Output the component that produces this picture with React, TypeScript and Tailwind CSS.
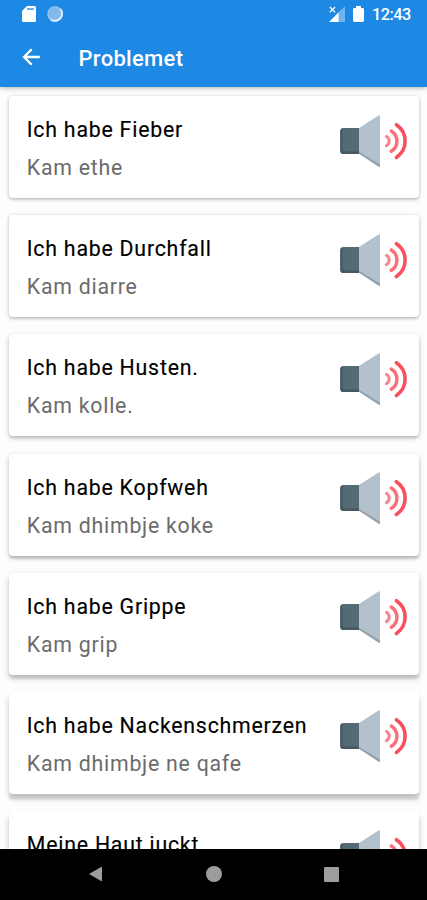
const phrases = [
  { de: 'Ich habe Fieber', sq: 'Kam ethe', shadow: 'shadow-[0_1px_4px_rgba(0,0,0,0.24),0_2px_2px_rgba(0,0,0,0.08)]' },
  { de: 'Ich habe Durchfall', sq: 'Kam diarre', shadow: 'shadow-[0_1px_4px_rgba(0,0,0,0.24),0_2px_2px_rgba(0,0,0,0.09)]' },
  { de: 'Ich habe Husten.', sq: 'Kam kolle.', shadow: 'shadow-[0_2px_5px_rgba(0,0,0,0.24),0_2px_2px_rgba(0,0,0,0.09)]' },
  { de: 'Ich habe Kopfweh', sq: 'Kam dhimbje koke', shadow: 'shadow-[0_2px_5px_rgba(0,0,0,0.24),0_3px_2px_rgba(0,0,0,0.1)]' },
  { de: 'Ich habe Grippe', sq: 'Kam grip', shadow: 'shadow-[0_3px_6px_rgba(0,0,0,0.22),0_4px_2px_rgba(0,0,0,0.1)]' },
  { de: 'Ich habe Nackenschmerzen', sq: 'Kam dhimbje ne qafe', shadow: 'shadow-[0_4px_6px_rgba(0,0,0,0.18),0_6px_2px_rgba(0,0,0,0.1)]' },
  { de: 'Meine Haut juckt', sq: '', shadow: 'shadow-[0_5px_6px_rgba(0,0,0,0.2),0_6px_2px_rgba(0,0,0,0.1)]' },
];

function Speaker() {
  return (
    <svg className="mt-[17.5px] h-[54px] w-[70px] shrink-0" viewBox="0 0 70 54">
      <path d="M4.5 14H21V40H4.5Q1.3 40 1.3 36.8V17.2Q1.3 14 4.5 14Z" fill="#546a75" />
      <path d="M1.3 34V36.8Q1.3 40 4.5 40H21V37.5H7Q3.5 37.5 3.5 34V14.2Q1.3 15 1.3 17.2Z" fill="#465963" />
      <path d="M20 14 39.5 1.5Q41 .8 41 2.5V51.5Q41 53.4 39.5 52.4L20 39.5Z" fill="#b3c1cd" />
      <path d="M20 37.8 41 50.5V52Q41 53.4 39.5 52.4L20 39.8Z" fill="#93a2ae" />
      <g fill="none" strokeLinecap="round">
        <path d="M47.5 22.5A5.3 5.3 0 0 1 47.5 31.7" stroke="#fb858d" strokeWidth="3.1" />
        <path d="M52.3 17A12 12 0 0 1 52.3 37.3" stroke="#fb6f79" strokeWidth="3.4" />
        <path d="M57.4 10.7A19.8 19.8 0 0 1 57.4 43.5" stroke="#f94f5e" strokeWidth="3.6" />
      </g>
    </svg>
  );
}

function StatusBar() {
  return (
    <div className="flex h-7 shrink-0 items-center pr-[17px] pl-[22px] text-white">
      <svg className="h-4 w-[14px]" viewBox="0 0 14 16">
        <path d="M5 0H12.5Q14 0 14 1.5V14.5Q14 16 12.5 16H1.5Q0 16 0 14.5V5Z" fill="white" />
        <path d="M5 3H12" stroke="#1e88e5" strokeWidth="2" opacity=".65" />
      </svg>
      <svg className="ml-[11px] h-4 w-4" viewBox="0 0 16 16">
        <circle cx="8" cy="8" r="7.7" fill="#9ccbf5" />
        <path d="M13.5 3A7.3 7.3 0 0 1 4 13.8" stroke="#e3f1fd" strokeWidth="1.8" fill="none" />
        <circle cx="7.5" cy="7.4" r="6.1" fill="#80b9ed" />
      </svg>
      <svg className="ml-auto h-4 w-4" viewBox="0 0 16 16">
        <path d="M9.7 6.3 16 0V16H9.7Z" fill="#6db4f1" />
        <path d="M0 16 9.7 6.3V16Z" fill="white" />
        <path d="M.8 1 6.2 6.4M6.2 1 .8 6.4" stroke="white" strokeWidth="1.3" />
      </svg>
      <svg className="ml-[8px] h-4 w-[11px]" viewBox="0 0 11 17" preserveAspectRatio="none">
        <path d="M3 0H8V2H9.5Q11 2 11 3.5V15.5Q11 17 9.5 17H1.5Q0 17 0 15.5V3.5Q0 2 1.5 2H3Z" fill="white" />
      </svg>
      <span className="ml-[8px] w-[38px] pt-px text-[16.3px] leading-7 font-medium tracking-[-0.5px] whitespace-nowrap">12:43</span>
    </div>
  );
}

export default function App() {
  return (
    <div className="flex h-[900px] w-[427px] flex-col overflow-hidden bg-[#fdfdfd] font-['Roboto',sans-serif]">
      <header className="z-10 flex h-[87px] shrink-0 flex-col bg-[#1e88e5] shadow-[0_1px_5px_rgba(0,0,0,0.3)]">
        <StatusBar />
        <div className="flex h-[59px] items-center pl-[22px]">
          <svg className="-mt-0.5 h-[18px] w-[18px]" viewBox="0 0 18 18" fill="none" stroke="white" strokeWidth="2.3">
            <path d="M17.8 9H2M9.7 1.2 2 9 9.7 16.8" />
          </svg>
          <h1 className="ml-[38.5px] pt-[2px] text-[22px] leading-[28px] font-medium tracking-[0.3px] text-white">Problemet</h1>
        </div>
      </header>
      <main className="flex min-h-0 flex-1 flex-col gap-[17.2px] overflow-hidden pt-[9px] pr-2 pl-[9px]">
        {phrases.map((p) => (
          <article key={p.de} className={`flex h-[102px] shrink-0 justify-between rounded-[4px] bg-white pr-[10.3px] pl-[17.8px] ${p.shadow}`}>
            <div className="pt-5 whitespace-nowrap">
              <h2 className="text-[21.3px] leading-[28px] tracking-[0.78px] text-black [-webkit-text-stroke:0.15px_black]">{p.de}</h2>
              {p.sq && <p className="mt-[10px] text-[21.3px] leading-[28px] tracking-[0.76px] text-[#6b6b6b]">{p.sq}</p>}
            </div>
            <Speaker />
          </article>
        ))}
      </main>
      <nav className="z-10 flex h-[51px] shrink-0 items-center bg-black pl-[89px]">
        <svg className="-mt-px h-4 w-[13px]" viewBox="0 0 13 16"><path d="M13 .5V15.5L0 8Z" fill="#9d9d9d" /></svg>
        <div className="-mt-px ml-[104px] size-[16px] rounded-full bg-[#9d9d9d]" />
        <div className="-mt-px ml-[102px] size-[15px] rounded-[1px] bg-[#9d9d9d]" />
      </nav>
    </div>
  );
}
